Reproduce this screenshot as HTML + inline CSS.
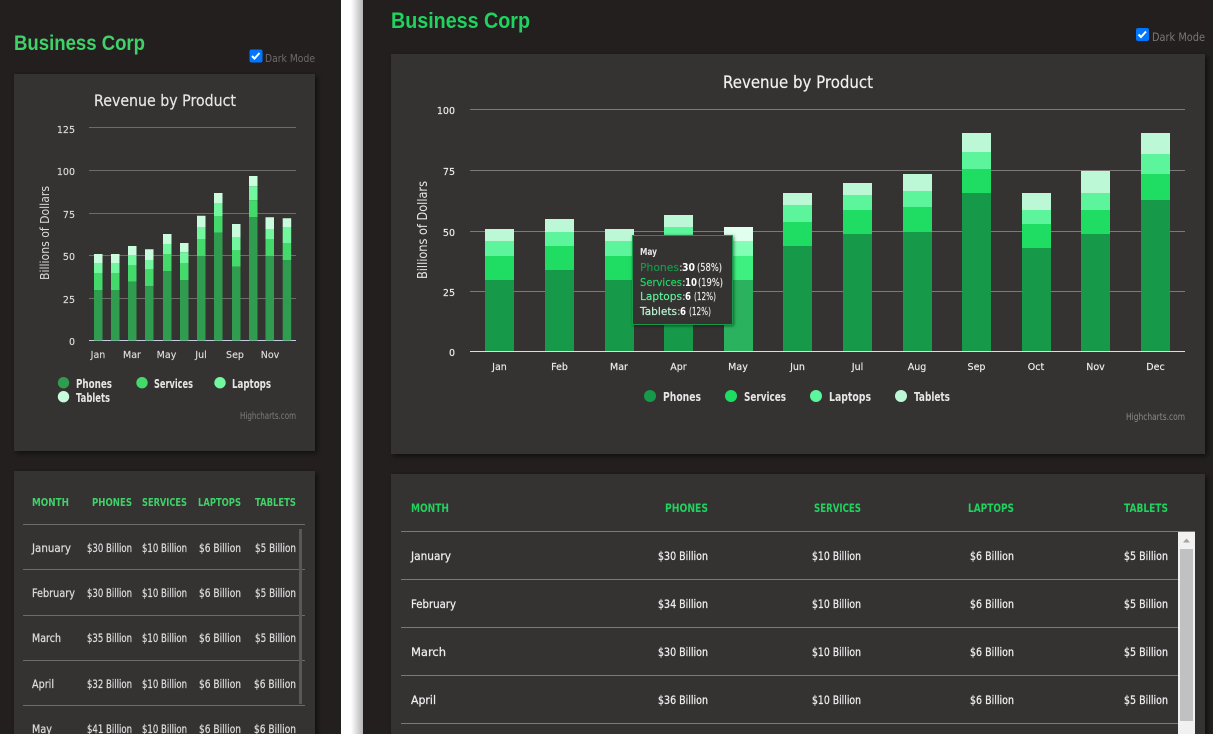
<!DOCTYPE html>
<html><head><meta charset="utf-8"><title>Business Corp</title>
<style>
html,body{margin:0;padding:0;background:#fff;overflow:hidden}
svg{display:block}
text{font-family:"DejaVu Sans","Liberation Sans",sans-serif}
.l{fill:#dcdcdc;stroke:#dcdcdc;stroke-width:.15px;font-size:9.5px}
.w{fill:#eee;stroke:#eee;stroke-width:.15px;font-size:9.5px}
.h{font-size:11.5px;font-weight:bold;fill:#1fd35f}
.hl{font-size:11px;font-weight:bold;fill:#3fd269}
.lg{font-size:12px;font-weight:bold;fill:#e6e6e6}
.tip{font-size:11px;stroke-width:.15px}
.r{fill:#eee;stroke:#eee;stroke-width:.25px;font-size:11.5px}
.q{fill:#dcdcdc;stroke:#dcdcdc;stroke-width:.25px;font-size:11.5px}
</style></head><body>
<svg width="1213" height="734" viewBox="0 0 1213 734" xmlns="http://www.w3.org/2000/svg">
<defs>
<linearGradient id="g" x1="0" x2="1" y1="0" y2="0"><stop offset="0" stop-color="#fff"/><stop offset=".45" stop-color="#fff"/><stop offset="1" stop-color="#b5b5b5"/></linearGradient>
<filter id="s" x="-5%" y="-5%" width="110%" height="110%"><feDropShadow dx="2" dy="2" stdDeviation="3" flood-color="#000" flood-opacity=".6"/></filter>
<filter id="ts" x="-10%" y="-10%" width="120%" height="130%"><feDropShadow dx="1" dy="1" stdDeviation="1.5" flood-color="#000" flood-opacity=".5"/></filter>
</defs>
<rect width="1213" height="734" fill="#231f1e"/>
<rect x="341" width="22" height="734" fill="url(#g)"/>

<!-- LEFT PANEL -->
<text x="14" y="50" font-size="21" font-weight="bold" fill="#3fd269" textLength="131" lengthAdjust="spacingAndGlyphs" style="font-family:'Liberation Sans',sans-serif">Business Corp</text>
<rect x="249.5" y="49.5" width="13" height="13" rx="2" fill="#0075ff"/>
<path d="M252 56l2.5 2.5 5-5.500" fill="none" stroke="#fff" stroke-width="2"/>
<text x="265" y="62" font-size="11" fill="#6f6b6a" textLength="50" lengthAdjust="spacingAndGlyphs">Dark Mode</text>
<rect x="14" y="74" width="301" height="377" fill="#353131" filter="url(#s)"/>
<rect x="14" y="471" width="301" height="280" fill="#353131" filter="url(#s)"/>
<text x="94" y="106" font-size="16" fill="#e6e6e6" stroke="#e6e6e6" stroke-width=".2" textLength="142" lengthAdjust="spacingAndGlyphs">Revenue by Product</text>
<path d="M89 127.5H296M89 170.5H296M89 213.5H296M89 255.5H296M89 298.5H296" stroke="#6f6b6a" stroke-width="1"/>
<path d="M89 340.5H296" stroke="#c5cbe0" stroke-width="1"/>
<text class="l" x="75" y="133" text-anchor="end">125</text><text class="l" x="75" y="175" text-anchor="end">100</text><text class="l" x="75" y="218" text-anchor="end">75</text><text class="l" x="75" y="260" text-anchor="end">50</text><text class="l" x="75" y="303" text-anchor="end">25</text><text class="l" x="75" y="345" text-anchor="end">0</text>
<text transform="translate(49 233) rotate(-90)" text-anchor="middle" font-size="12.5" fill="#dcdcdc" textLength="94" lengthAdjust="spacingAndGlyphs">Billions of Dollars</text>
<path fill="#c8fcdc" d="M94 254h8.5v9h-8.5zM111 254h8.5v9h-8.5zM128 246h8.5v9h-8.5zM145 249.3h8.5v10.7h-8.5zM163 234h8.5v10h-8.5zM180 243h8.5v9.3h-8.5zM197 215.7h8.5v11.3h-8.5zM214 193h8.5v10h-8.5zM232 224h8.5v13h-8.5zM249 176h8.5v10.3h-8.5zM265.5 217.3h8.5v11.700h-8.5zM282.7 218.3h8.5v8.700h-8.5z"/>
<path fill="#72f79f" d="M94 263h8.5v10h-8.5zM111 263h8.5v10h-8.5zM128 255h8.5v10h-8.5zM145 260h8.5v9h-8.5zM163 244h8.5v10h-8.5zM180 252.3h8.5v10.7h-8.5zM197 227h8.5v12h-8.5zM214 203h8.5v13h-8.5zM232 237h8.5v13h-8.5zM249 186.3h8.5v14h-8.5zM265.5 229h8.5v10h-8.5zM282.7 227h8.5v16h-8.5z"/>
<path fill="#44da6b" d="M94 273h8.5v17h-8.5zM111 273h8.5v17h-8.5zM128 265h8.5v16.7h-8.5zM145 269h8.5v17.3h-8.5zM163 254h8.5v17h-8.5zM180 263h8.5v17h-8.5zM197 239h8.5v17h-8.5zM214 216h8.5v16.7h-8.5zM232 250h8.5v16.7h-8.5zM249 200.3h8.5v17h-8.5zM265.5 239h8.5v17h-8.5zM282.7 243h8.5v17h-8.5z"/>
<path fill="#2f9c4f" d="M94 290h8.5v50.5h-8.5zM111 290h8.5v50.5h-8.5zM128 281.7h8.5v58.8h-8.5zM145 286.3h8.5v54.2h-8.5zM163 271h8.5v69.5h-8.5zM180 280h8.5v60.5h-8.5zM197 256h8.5v84.5h-8.5zM214 232.7h8.5v107.8h-8.5zM232 266.7h8.5v73.8h-8.5zM249 217.3h8.5v123.2h-8.5zM265.5 256h8.5v84.5h-8.5zM282.7 260h8.5v80.5h-8.5z"/>
<text class="l" x="98" y="358" text-anchor="middle">Jan</text><text class="l" x="132" y="358" text-anchor="middle">Mar</text><text class="l" x="166.5" y="358" text-anchor="middle">May</text><text class="l" x="201" y="358" text-anchor="middle">Jul</text><text class="l" x="235" y="358" text-anchor="middle">Sep</text><text class="l" x="270" y="358" text-anchor="middle">Nov</text>
<circle cx="63.5" cy="382.7" r="5.7" fill="#2f9c4f"/><circle cx="142" cy="382.7" r="5.7" fill="#44da6b"/><circle cx="220" cy="382.7" r="5.7" fill="#72f79f"/><circle cx="63.5" cy="396.7" r="5.7" fill="#c8fcdc"/>
<text class="lg" x="76" y="388" textLength="36" lengthAdjust="spacingAndGlyphs">Phones</text>
<text class="lg" x="154" y="388" textLength="39" lengthAdjust="spacingAndGlyphs">Services</text>
<text class="lg" x="232" y="388" textLength="39" lengthAdjust="spacingAndGlyphs">Laptops</text>
<text class="lg" x="76" y="402" textLength="34" lengthAdjust="spacingAndGlyphs">Tablets</text>
<text x="240" y="419" font-size="9.5" fill="#7d7d7d" textLength="56" lengthAdjust="spacingAndGlyphs">Highcharts.com</text>

<text class="hl" x="32" y="506" textLength="37" lengthAdjust="spacingAndGlyphs">MONTH</text>
<text class="hl" x="92" y="506" textLength="40" lengthAdjust="spacingAndGlyphs">PHONES</text>
<text class="hl" x="142" y="506" textLength="45" lengthAdjust="spacingAndGlyphs">SERVICES</text>
<text class="hl" x="198" y="506" textLength="43" lengthAdjust="spacingAndGlyphs">LAPTOPS</text>
<text class="hl" x="255" y="506" textLength="41" lengthAdjust="spacingAndGlyphs">TABLETS</text>
<path d="M23 524.5H305M23 569.5H305M23 615.5H305M23 660.5H305M23 705.5H305" stroke="#6f6b6a" stroke-width="1"/>
<rect x="299" y="529" width="3" height="175" fill="#5a5757"/>
<text class="q" x="32" y="552" textLength="39" lengthAdjust="spacingAndGlyphs">January</text>
<text class="q" x="87" y="552" textLength="45" lengthAdjust="spacingAndGlyphs">$30 Billion</text><text class="q" x="142" y="552" textLength="45" lengthAdjust="spacingAndGlyphs">$10 Billion</text><text class="q" x="199" y="552" textLength="42" lengthAdjust="spacingAndGlyphs">$6 Billion</text><text class="q" x="255" y="552" textLength="41" lengthAdjust="spacingAndGlyphs">$5 Billion</text>
<text class="q" x="32" y="597" textLength="43" lengthAdjust="spacingAndGlyphs">February</text>
<text class="q" x="87" y="597" textLength="45" lengthAdjust="spacingAndGlyphs">$30 Billion</text><text class="q" x="142" y="597" textLength="45" lengthAdjust="spacingAndGlyphs">$10 Billion</text><text class="q" x="199" y="597" textLength="42" lengthAdjust="spacingAndGlyphs">$6 Billion</text><text class="q" x="255" y="597" textLength="41" lengthAdjust="spacingAndGlyphs">$5 Billion</text>
<text class="q" x="32" y="642" textLength="29" lengthAdjust="spacingAndGlyphs">March</text>
<text class="q" x="87" y="642" textLength="45" lengthAdjust="spacingAndGlyphs">$35 Billion</text><text class="q" x="142" y="642" textLength="45" lengthAdjust="spacingAndGlyphs">$10 Billion</text><text class="q" x="199" y="642" textLength="42" lengthAdjust="spacingAndGlyphs">$6 Billion</text><text class="q" x="255" y="642" textLength="41" lengthAdjust="spacingAndGlyphs">$5 Billion</text>
<text class="q" x="32" y="688" textLength="22" lengthAdjust="spacingAndGlyphs">April</text>
<text class="q" x="87" y="688" textLength="45" lengthAdjust="spacingAndGlyphs">$32 Billion</text><text class="q" x="142" y="688" textLength="45" lengthAdjust="spacingAndGlyphs">$10 Billion</text><text class="q" x="199" y="688" textLength="42" lengthAdjust="spacingAndGlyphs">$6 Billion</text><text class="q" x="254" y="688" textLength="42" lengthAdjust="spacingAndGlyphs">$6 Billion</text>
<text class="q" x="32" y="733" textLength="20" lengthAdjust="spacingAndGlyphs">May</text>
<text class="q" x="87" y="733" textLength="45" lengthAdjust="spacingAndGlyphs">$41 Billion</text><text class="q" x="142" y="733" textLength="45" lengthAdjust="spacingAndGlyphs">$10 Billion</text><text class="q" x="199" y="733" textLength="42" lengthAdjust="spacingAndGlyphs">$6 Billion</text><text class="q" x="254" y="733" textLength="42" lengthAdjust="spacingAndGlyphs">$6 Billion</text>

<!-- RIGHT PANEL -->
<text x="391" y="28" font-size="22" font-weight="bold" fill="#1fd35f" textLength="139" lengthAdjust="spacingAndGlyphs" style="font-family:'Liberation Sans',sans-serif">Business Corp</text>
<rect x="1136" y="28" width="13" height="13" rx="2" fill="#0075ff"/>
<path d="M1138.5 34.5l2.5 2.5 5-5.500" fill="none" stroke="#fff" stroke-width="2"/>
<text x="1152" y="41" font-size="11.5" fill="#777" textLength="53" lengthAdjust="spacingAndGlyphs">Dark Mode</text>
<rect x="391" y="54" width="814" height="400" fill="#353131" filter="url(#s)"/>
<rect x="391" y="474" width="814" height="280" fill="#353131" filter="url(#s)"/>
<text x="723" y="88" font-size="16.5" fill="#f0f0f0" stroke="#f0f0f0" stroke-width=".2" textLength="150" lengthAdjust="spacingAndGlyphs">Revenue by Product</text>
<path d="M470 109.5H1185M470 170.5H1185M470 231.5H1185M470 291.5H1185" stroke="#7d7978" stroke-width="1"/>
<path d="M470 351.5H1185" stroke="#d8dbe8" stroke-width="1"/>
<text class="w" x="455" y="114" text-anchor="end">100</text><text class="w" x="455" y="175" text-anchor="end">75</text><text class="w" x="455" y="236" text-anchor="end">50</text><text class="w" x="455" y="296" text-anchor="end">25</text><text class="w" x="455" y="356" text-anchor="end">0</text>
<text transform="translate(427 230) rotate(-90)" text-anchor="middle" font-size="13" fill="#e6e6e6" textLength="98" lengthAdjust="spacingAndGlyphs">Billions of Dollars</text>
<path fill="#bdf8d6" d="M485 229h29v12h-29zM545 219h29v13h-29zM605 229h29v12h-29zM664 215h29v12h-29zM783 193h29v12h-29zM843 183h29v12h-29zM903 174h29v17h-29zM962 133h29v19h-29zM1022 193h29v17h-29zM1081 171h29v22h-29zM1141 133h29v21h-29z"/>
<path fill="#5cf59b" d="M485 241h29v15h-29zM545 232h29v14h-29zM605 241h29v15h-29zM664 227h29v15h-29zM783 205h29v17h-29zM843 195h29v15h-29zM903 191h29v16h-29zM962 152h29v17h-29zM1022 210h29v14h-29zM1081 193h29v17h-29zM1141 154h29v20h-29z"/>
<path fill="#1fdc63" d="M485 256h29v24h-29zM545 246h29v24h-29zM605 256h29v24h-29zM664 242h29v23h-29zM783 222h29v24h-29zM843 210h29v24h-29zM903 207h29v25h-29zM962 169h29v24h-29zM1022 224h29v24h-29zM1081 210h29v24h-29zM1141 174h29v26h-29z"/>
<path fill="#169a4a" d="M485 280h29v71h-29zM545 270h29v81h-29zM605 280h29v71h-29zM664 265h29v86h-29zM783 246h29v105h-29zM843 234h29v117h-29zM903 232h29v119h-29zM962 193h29v158h-29zM1022 248h29v103h-29zM1081 234h29v117h-29zM1141 200h29v151h-29z"/>
<rect x="724" y="227" width="29" height="14" fill="#e0ffee"/><rect x="724" y="241" width="29" height="15" fill="#80ffb5"/><rect x="724" y="256" width="29" height="24" fill="#3ef07f"/><rect x="724" y="280" width="29" height="71" fill="#2bb25f"/>
<text class="w" x="499.5" y="370" text-anchor="middle">Jan</text><text class="w" x="559.5" y="370" text-anchor="middle">Feb</text><text class="w" x="619" y="370" text-anchor="middle">Mar</text><text class="w" x="678.5" y="370" text-anchor="middle">Apr</text><text class="w" x="738" y="370" text-anchor="middle">May</text><text class="w" x="797.5" y="370" text-anchor="middle">Jun</text><text class="w" x="857.5" y="370" text-anchor="middle">Jul</text><text class="w" x="917" y="370" text-anchor="middle">Aug</text><text class="w" x="976.5" y="370" text-anchor="middle">Sep</text><text class="w" x="1036" y="370" text-anchor="middle">Oct</text><text class="w" x="1095.5" y="370" text-anchor="middle">Nov</text><text class="w" x="1155.5" y="370" text-anchor="middle">Dec</text>
<circle cx="650" cy="396" r="6" fill="#169a4a"/><circle cx="731" cy="396" r="6" fill="#1fdc63"/><circle cx="816" cy="396" r="6" fill="#5cf59b"/><circle cx="901" cy="396" r="6" fill="#bdf8d6"/>
<text class="lg" x="663" y="401" textLength="38" lengthAdjust="spacingAndGlyphs">Phones</text>
<text class="lg" x="744" y="401" textLength="42" lengthAdjust="spacingAndGlyphs">Services</text>
<text class="lg" x="829" y="401" textLength="42" lengthAdjust="spacingAndGlyphs">Laptops</text>
<text class="lg" x="914" y="401" textLength="36" lengthAdjust="spacingAndGlyphs">Tablets</text>
<text x="1126" y="420" font-size="9.5" fill="#8a8a8a" textLength="59" lengthAdjust="spacingAndGlyphs">Highcharts.com</text>

<!-- tooltip -->
<rect x="632.5" y="235.5" width="100" height="89" fill="#353131" stroke="#169a4a" filter="url(#ts)"/>
<text x="640" y="255" font-size="9.5" font-weight="bold" fill="#e6e6e6" textLength="17" lengthAdjust="spacingAndGlyphs">May</text>
<text class="tip" x="640" y="271" fill="#169a4a" stroke="#169a4a" textLength="39" lengthAdjust="spacingAndGlyphs">Phones</text><text class="tip" x="679" y="271" fill="#ddd">:</text><text class="tip" x="682" y="271" font-weight="bold" fill="#fff" textLength="13" lengthAdjust="spacingAndGlyphs">30</text><text class="tip" x="697" y="271" fill="#eee" stroke="#eee" textLength="25" lengthAdjust="spacingAndGlyphs">(58%)</text>
<text class="tip" x="640" y="286" fill="#1fdc63" stroke="#1fdc63" textLength="42" lengthAdjust="spacingAndGlyphs">Services</text><text class="tip" x="682" y="286" fill="#ddd">:</text><text class="tip" x="685" y="286" font-weight="bold" fill="#fff" textLength="12" lengthAdjust="spacingAndGlyphs">10</text><text class="tip" x="698" y="286" fill="#eee" stroke="#eee" textLength="25" lengthAdjust="spacingAndGlyphs">(19%)</text>
<text class="tip" x="640" y="300" fill="#5cf59b" stroke="#5cf59b" textLength="42" lengthAdjust="spacingAndGlyphs">Laptops</text><text class="tip" x="682" y="300" fill="#ddd">:</text><text class="tip" x="685" y="300" font-weight="bold" fill="#fff" textLength="6" lengthAdjust="spacingAndGlyphs">6</text><text class="tip" x="694" y="300" fill="#eee" stroke="#eee" textLength="22" lengthAdjust="spacingAndGlyphs">(12%)</text>
<text class="tip" x="640" y="315" fill="#bdf8d6" stroke="#bdf8d6" textLength="37" lengthAdjust="spacingAndGlyphs">Tablets</text><text class="tip" x="677" y="315" fill="#ddd">:</text><text class="tip" x="680" y="315" font-weight="bold" fill="#fff" textLength="6" lengthAdjust="spacingAndGlyphs">6</text><text class="tip" x="689" y="315" fill="#eee" stroke="#eee" textLength="22" lengthAdjust="spacingAndGlyphs">(12%)</text>

<text class="h" x="411" y="512" textLength="38" lengthAdjust="spacingAndGlyphs">MONTH</text>
<text class="h" x="665" y="512" textLength="43" lengthAdjust="spacingAndGlyphs">PHONES</text>
<text class="h" x="814" y="512" textLength="47" lengthAdjust="spacingAndGlyphs">SERVICES</text>
<text class="h" x="968" y="512" textLength="46" lengthAdjust="spacingAndGlyphs">LAPTOPS</text>
<text class="h" x="1124" y="512" textLength="44" lengthAdjust="spacingAndGlyphs">TABLETS</text>
<path d="M401 531.5H1195M401 579.5H1178M401 627.5H1178M401 675.5H1178M401 723.5H1178" stroke="#7d7978" stroke-width="1"/>
<text class="r" x="411" y="560" textLength="40" lengthAdjust="spacingAndGlyphs">January</text><text class="r" x="658" y="560" textLength="50" lengthAdjust="spacingAndGlyphs">$30 Billion</text><text class="r" x="812" y="560" textLength="49" lengthAdjust="spacingAndGlyphs">$10 Billion</text><text class="r" x="970" y="560" textLength="44" lengthAdjust="spacingAndGlyphs">$6 Billion</text><text class="r" x="1124" y="560" textLength="44" lengthAdjust="spacingAndGlyphs">$5 Billion</text>
<text class="r" x="411" y="608" textLength="45" lengthAdjust="spacingAndGlyphs">February</text><text class="r" x="658" y="608" textLength="50" lengthAdjust="spacingAndGlyphs">$34 Billion</text><text class="r" x="812" y="608" textLength="49" lengthAdjust="spacingAndGlyphs">$10 Billion</text><text class="r" x="970" y="608" textLength="44" lengthAdjust="spacingAndGlyphs">$6 Billion</text><text class="r" x="1124" y="608" textLength="44" lengthAdjust="spacingAndGlyphs">$5 Billion</text>
<text class="r" x="411" y="656" textLength="35" lengthAdjust="spacingAndGlyphs">March</text><text class="r" x="658" y="656" textLength="50" lengthAdjust="spacingAndGlyphs">$30 Billion</text><text class="r" x="812" y="656" textLength="49" lengthAdjust="spacingAndGlyphs">$10 Billion</text><text class="r" x="970" y="656" textLength="44" lengthAdjust="spacingAndGlyphs">$6 Billion</text><text class="r" x="1124" y="656" textLength="44" lengthAdjust="spacingAndGlyphs">$5 Billion</text>
<text class="r" x="411" y="704" textLength="25" lengthAdjust="spacingAndGlyphs">April</text><text class="r" x="658" y="704" textLength="50" lengthAdjust="spacingAndGlyphs">$36 Billion</text><text class="r" x="812" y="704" textLength="49" lengthAdjust="spacingAndGlyphs">$10 Billion</text><text class="r" x="970" y="704" textLength="44" lengthAdjust="spacingAndGlyphs">$6 Billion</text><text class="r" x="1124" y="704" textLength="44" lengthAdjust="spacingAndGlyphs">$5 Billion</text>
<rect x="1178" y="532" width="17" height="202" fill="#f1f1f1"/>
<rect x="1180" y="549" width="13" height="172" fill="#c1c1c1"/>
<path d="M1186.5 538.5l3.5 4h-7z" fill="#a3a3a3"/>
</svg>
</body></html>
